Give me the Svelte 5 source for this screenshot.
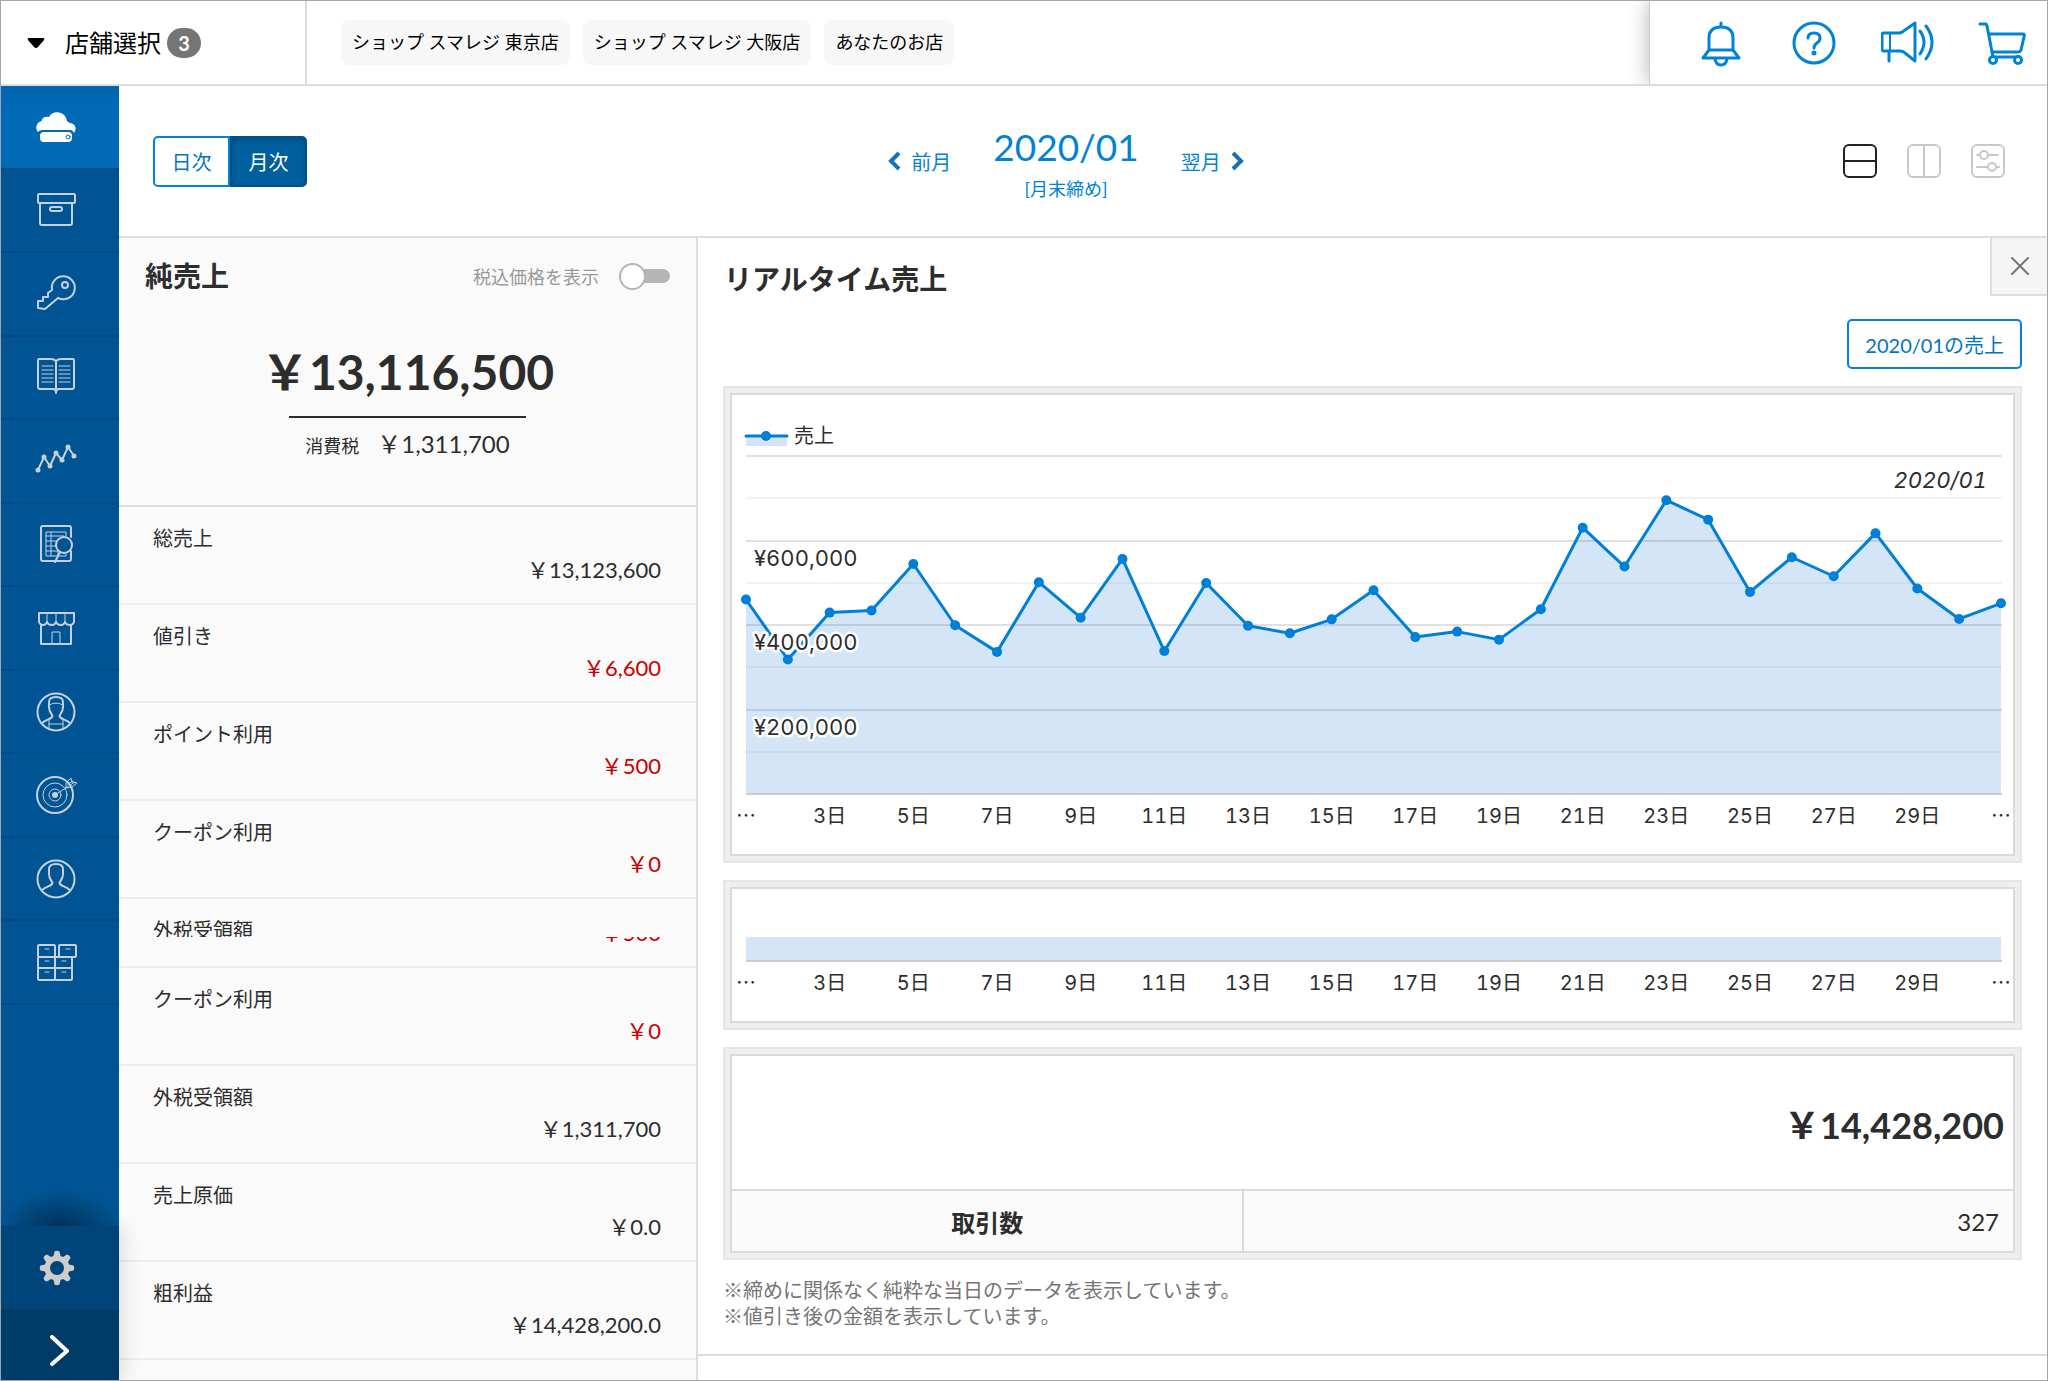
<script>
	const stores = ['ショップ スマレジ 東京店', 'ショップ スマレジ 大阪店', 'あなたのお店'];

	const menu = [
		{ icon: 'cloud', label: 'ホーム' },
		{ icon: 'box', label: '商品' },
		{ icon: 'key', label: '権限' },
		{ icon: 'book', label: '取引' },
		{ icon: 'trend', label: '売上分析' },
		{ icon: 'report', label: '帳票' },
		{ icon: 'shop', label: '店舗' },
		{ icon: 'staff', label: 'スタッフ' },
		{ icon: 'target', label: '目標' },
		{ icon: 'member', label: '会員' },
		{ icon: 'drawers', label: '在庫' }
	];

	const rowsTop = [
		{ label: '総売上', value: '￥13,123,600' },
		{ label: '値引き', value: '￥6,600', minus: true },
		{ label: 'ポイント利用', value: '￥500', minus: true },
		{ label: 'クーポン利用', value: '￥0', minus: true }
	];

	const rowsBottom = [
		{ label: 'クーポン利用', value: '￥0', minus: true },
		{ label: '外税受領額', value: '￥1,311,700' },
		{ label: '売上原価', value: '￥0.0' },
		{ label: '粗利益', value: '￥14,428,200.0' }
	];

	// daily sales, in thousands of yen
	const sales = [
		458, 316, 427, 432, 542, 397, 334, 499, 415, 554, 336, 497, 396, 378, 411, 480,
		369, 382, 363, 435, 628, 536, 693, 647, 476, 558, 513, 615, 484, 412, 449
	];

	const dayLabels = sales
		.map((_, i) => ({ index: i, text: i === 0 || i === sales.length - 1 ? '…' : `${i + 1}日` }))
		.filter((d) => d.index % 2 === 0);

	const plotTop = 60;
	const plotHeight = 338;
	const plotBottom = plotTop + plotHeight;
	const side = 14;

	const gridLines = [0, 1, 2, 3, 4, 5, 6, 7].map((n) => ({
		y: plotTop + Math.round((n * plotHeight) / 8),
		major: n % 2 === 0
	}));
	const yLabels = [600, 400, 200];

	let chartWidth = $state(1281);
	let taxIncluded = $state(false);
	let period = $state('month');

	let plotWidth = $derived(chartWidth - side * 2 + 3);

	function x(i) {
		return side + (i * (plotWidth - 1)) / (sales.length - 1);
	}

	function y(value) {
		return plotBottom - (value / 800) * plotHeight;
	}

	let points = $derived(sales.map((v, i) => ({ x: x(i), y: y(v) })));
	let line = $derived(points.map((p) => `${p.x},${p.y}`).join(' '));
	let area = $derived(`${x(0)},${plotBottom} ${line} ${x(sales.length - 1)},${plotBottom}`);
</script>

{#snippet menuIcon(name)}
	<svg class="menu-icon" viewBox="0 0 44 44" width="44" height="44" aria-hidden="true">
		{#if name === 'cloud'}
			<path class="solid" d="M4 27C1 24 2 17 7.500 16C8 12 12 11 15 12C18 5 31 5 33 16C34 17 35 17.500 36 18C42 19 43 24 40 28C39 25.500 37 25 35 25H10C7 25 5 25.500 4 27Z" />
			<rect class="solid" x="6" y="27" width="32" height="10" rx="4" />
			<circle class="dot-ring" cx="34" cy="32" r="2" />
		{:else if name === 'box'}
			<rect x="4" y="6" width="37" height="9" rx="1" />
			<path d="M6 15V35Q6 37 8 37H36Q38 37 38 35V15" />
			<rect x="16" y="19" width="12" height="4" rx="2" />
		{:else if name === 'key'}
			<path d="M24 26L11 37L4 36V29H9V25H14V21L18 18A11.500 11.500 0 1 1 24 26Z" />
			<circle cx="31" cy="13" r="3" />
		{:else if name === 'book'}
			<path d="M22 6Q20 4 17 4H5Q4 4 4 6V32Q4 34 6 34H20L22 36L24 34H38Q40 34 40 32V6Q40 4 39 4H27Q24 4 22 6V38" />
			<path class="fine" d="M8 11H19M8 15H19M8 19H19M8 23H19M8 27H19M25 11H36M25 15H36M25 19H36M25 23H36M25 27H36" />
		{:else if name === 'trend'}
			<path d="M4 31L10 18L16 27L22 14L28 21L34 8L40 17" />
			<g class="nodes">
				<circle cx="4" cy="31" r="2.500" /><circle cx="10" cy="18" r="2.500" /><circle cx="16" cy="27" r="2.500" />
				<circle cx="22" cy="14" r="2.500" /><circle cx="28" cy="21" r="2.500" /><circle cx="34" cy="8" r="2.500" />
				<circle cx="40" cy="17" r="2.500" />
			</g>
		{:else if name === 'report'}
			<path d="M37 15V6Q37 4 35 4H9Q7 4 7 6V37Q7 39 9 39H35Q37 39 37 37V29" />
			<path class="fine" d="M32 14V10H12V34H32V32M12 14H30M12 19H23M12 24H22M12 29H24M17 10V34M24 29V34" />
			<circle cx="30" cy="23" r="8" />
			<path d="M26 30L21 40" />
		{:else if name === 'shop'}
			<path d="M5 7H40V16Q39 19 36 19Q32 19 31 16Q30 19 27 19Q23 19 22 16Q21 19 18 19Q14 19 13 16Q12 19 9 19Q6 19 5 16Z" />
			<path class="fine" d="M13 7V16M22 7V16M31 7V16" />
			<path d="M7 19V38H37V19" />
			<path class="fine" d="M18 38V26H26V38" />
		{:else if name === 'staff' || name === 'member'}
			<circle cx="22" cy="22" r="18.500" />
			<path d="M8 33C13 29 18 29 18.500 26C18 24 15 22 15 17V12Q15 7 22 7Q29 7 29 12V17C29 22 26 24 25.500 26C26 29 31 29 36 33" />
			{#if name === 'staff'}
				<path class="fine" d="M15 15Q22 11 29 15M15 30V39M29 30V39M15 34H29" />
			{/if}
		{:else if name === 'target'}
			<circle cx="21" cy="22" r="18" />
			<circle class="fine" cx="21" cy="22" r="12" />
			<circle class="fine" cx="21" cy="22" r="6" />
			<circle class="solid" cx="21" cy="22" r="3" />
			<path class="fine" d="M21 22L41 9M32 15V10L37 5L38 9L43 10L38 14L32 15M34 11L39 8" />
		{:else if name === 'drawers'}
			<rect x="4" y="5" width="17" height="12" rx="1" />
			<rect x="25" y="5" width="17" height="12" rx="1" />
			<rect x="4" y="17" width="17" height="11" rx="1" />
			<rect x="21" y="17" width="17" height="11" rx="1" />
			<rect x="4" y="28" width="17" height="12" rx="1" />
			<rect x="21" y="28" width="17" height="12" rx="1" />
			<path class="fine" d="M11 9H15M32 9H36M11 21H15M28 21H32M11 32H15M28 32H32" />
		{/if}
	</svg>
{/snippet}

{#snippet summaryRow(row)}
	<div class="row">
		<dt>{row.label}</dt>
		<dd class:minus={row.minus}>{row.value}</dd>
	</div>
{/snippet}

{#snippet dayAxis(baseline)}
	{#each dayLabels as day}
		<text class:ellipsis={day.text === '…'} x={x(day.index)} y={baseline} text-anchor="middle">{day.text}</text>
	{/each}
{/snippet}

<div class="app">
	<header class="topbar">
		<button class="store-select">
			<svg viewBox="0 0 18 12" width="18" height="12" aria-hidden="true"><path d="M2 1H16Q18 1 17 3L11 10Q9 12 7 10L1 3Q0 1 2 1Z" /></svg>
			<span>店舗選択</span>
			<span class="badge">3</span>
		</button>
		<div class="stores">
			{#each stores as store}
				<span class="store">{store}</span>
			{/each}
		</div>
		<div class="tools">
			<button aria-label="お知らせ">
				<svg viewBox="0 0 56 48" width="56" height="48" aria-hidden="true">
					<path d="M28 4V8M16 31V19Q16 8 28 8Q40 8 40 19V31L46 39H10L16 31H40" />
					<path d="M22 40Q23 46 28 46Q33 46 34 40" />
				</svg>
			</button>
			<button aria-label="ヘルプ">
				<svg viewBox="0 0 56 48" width="56" height="48" aria-hidden="true">
					<circle cx="27" cy="24" r="20" />
					<path d="M21 19Q21 14 27 14Q33 14 33 19Q33 22 30 24Q27 26 27 29" />
					<circle class="solid" cx="27" cy="34" r="1" />
				</svg>
			</button>
			<button aria-label="案内">
				<svg viewBox="0 0 56 48" width="56" height="48" aria-hidden="true">
					<path d="M3 14H19Q22 13 24 11L34 4V42L24 34Q22 32 19 32H3Q1 32 1 30V16Q1 14 3 14Z" />
					<path class="fine" d="M9 14V32" />
					<path d="M8 32V42M39 12Q47 23 39 35M45 7Q57 23 45 40" />
				</svg>
			</button>
			<button aria-label="カート">
				<svg viewBox="0 0 56 48" width="56" height="48" aria-hidden="true">
					<path d="M5 5H11L12 7L18 38H45" />
					<path d="M14 15H48Q50 15 49 18L46 31Q45 33 43 33H17" />
					<circle class="wheel" cx="18" cy="41" r="3.500" />
					<circle class="wheel" cx="43" cy="41" r="3.500" />
				</svg>
			</button>
		</div>
	</header>

	<div class="body">
		<aside class="sidebar">
			<nav class="menu">
				{#each menu as item, i}
					<a href="/{item.icon}" class:active={i === 0} aria-label={item.label}>{@render menuIcon(item.icon)}</a>
				{/each}
			</nav>
			<div class="sidebar-foot">
				<a class="settings" href="/settings" aria-label="設定">
					<svg viewBox="0 0 36 36" width="36" height="36" aria-hidden="true">
						<path fill-rule="evenodd" d="M15.500 1.500Q18 0 20.500 1.500L21.500 6L24 7L28 4.500Q31 5 31.500 8L29 12L30 14.500L34.500 15.500Q36 18 34.500 20.500L30 21.500L29 24L31.500 28Q31 31 28 31.500L24 29L21.500 30L20.500 34.500Q18 36 15.500 34.500L14.500 30L12 29L8 31.500Q5 31 4.500 28L7 24L6 21.500L1.500 20.500Q0 18 1.500 15.500L6 14.500L7 12L4.500 8Q5 5 8 4.500L12 7L14.500 6ZM18 11A7 7 0 1 0 18 25A7 7 0 1 0 18 11Z" />
					</svg>
				</a>
				<button class="expand" aria-label="メニューを開く">
					<svg viewBox="0 0 20 32" width="20" height="32" aria-hidden="true"><path d="M2 2L17 16L2 29" /></svg>
				</button>
			</div>
		</aside>

		<main>
			<div class="toolbar">
				<div class="period">
					<button class:on={period === 'day'} onclick={() => (period = 'day')}>日次</button>
					<button class:on={period === 'month'} onclick={() => (period = 'month')}>月次</button>
				</div>
				<div class="month-nav">
					<a href="/prev">
						<svg viewBox="0 0 14 20" width="14" height="20" aria-hidden="true"><path d="M12 2L4 10L12 18" /></svg>前月
					</a>
					<div class="current">
						<strong>2020/01</strong>
						<span>[月末締め]</span>
					</div>
					<a href="/next">
						翌月<svg viewBox="0 0 14 20" width="14" height="20" aria-hidden="true"><path d="M2 2L10 10L2 18" /></svg>
					</a>
				</div>
				<div class="layouts">
					<button class="on" aria-label="上下に並べる">
						<svg viewBox="0 0 34 34" width="34" height="34" aria-hidden="true"><rect x="1" y="1" width="32" height="32" rx="5" /><path d="M1 17H33" /></svg>
					</button>
					<button aria-label="左右に並べる">
						<svg viewBox="0 0 34 34" width="34" height="34" aria-hidden="true"><rect x="1" y="1" width="32" height="32" rx="5" /><path d="M17 1V33" /></svg>
					</button>
					<button aria-label="表示設定">
						<svg viewBox="0 0 34 34" width="34" height="34" aria-hidden="true">
							<rect x="1" y="1" width="32" height="32" rx="5" />
							<path d="M6 11H9M17 11H27M6 23H17M25 23H28" />
							<circle cx="13" cy="11" r="4" /><circle cx="21" cy="23" r="4" />
						</svg>
					</button>
				</div>
			</div>

			<div class="panels">
				<section class="summary">
					<div class="net">
						<div class="net-head">
							<h2>純売上</h2>
							<label for="tax">税込価格を表示</label>
							<input id="tax" class="switch" type="checkbox" bind:checked={taxIncluded} />
						</div>
						<p class="amount">￥13,116,500</p>
						<p class="tax"><span>消費税</span>￥1,311,700</p>
					</div>
					<dl>
						{#each rowsTop as row}
							{@render summaryRow(row)}
						{/each}
						<div class="slice head">
							{@render summaryRow({ label: '外税受領額', value: '' })}
						</div>
						<div class="slice tail">
							{@render summaryRow({ label: '', value: '￥500', minus: true })}
						</div>
						{#each rowsBottom as row}
							{@render summaryRow(row)}
						{/each}
					</dl>
				</section>

				<section class="realtime">
					<div class="realtime-head">
						<h2>リアルタイム売上</h2>
						<button class="close" aria-label="閉じる">
							<svg viewBox="0 0 20 20" width="20" height="20" aria-hidden="true"><path d="M2 2L18 18M18 2L2 18" /></svg>
						</button>
					</div>
					<div class="realtime-body">
						<button class="month-sales">2020/01の売上</button>

						<div class="card">
							<div class="card-inner" bind:clientWidth={chartWidth}>
								<svg class="chart" width={chartWidth} height="459" role="img" aria-label="売上">
									<rect class="area" x={side} y="41" width="41" height="10" />
									<path class="line" d="M{side} 41h41" />
									<circle class="point" cx={side + 20} cy="41" r="5" />
									<text x="62" y="48">売上</text>

									{#each gridLines as g}
										<rect class={g.major ? 'grid major' : 'grid'} x={side} y={g.y} width={plotWidth} height="2" />
									{/each}
									<rect class="grid base" x={side} y={plotBottom} width={plotWidth} height="2" />

									<polygon class="area" points={area} />
									<polyline class="line" points={line} />
									{#each points as p}
										<circle class="point" cx={p.x} cy={p.y} r="5" />
									{/each}

									{#each yLabels as value}
										<text class="halo" x={side + 8} y={y(value) + 26}>¥{value},000</text>
									{/each}
									<text class="month" x={chartWidth - 26} y="93" text-anchor="end">2020/01</text>
									{@render dayAxis(428)}
								</svg>
							</div>
						</div>

						<div class="card">
							<div class="card-inner">
								<svg class="chart" width={chartWidth} height="132" role="img" aria-label="日付">
									<rect class="area" x={side} y="48" width={plotWidth - 1} height="23" />
									<rect class="grid base" x={side} y="71" width={plotWidth} height="2" />
									{@render dayAxis(101)}
								</svg>
							</div>
						</div>

						<div class="card">
							<table class="card-inner totals">
								<colgroup><col class="name" /><col /></colgroup>
								<tbody>
									<tr><td class="total" colspan="2">￥14,428,200</td></tr>
									<tr class="count"><th scope="row">取引数</th><td>327</td></tr>
								</tbody>
							</table>
						</div>

						<p class="notes">
							※締めに関係なく純粋な当日のデータを表示しています。<br />
							※値引き後の金額を表示しています。
						</p>
					</div>
				</section>
			</div>
		</main>
	</div>
</div>

<style>
	:global(body) {
		margin: 0;
	}

	.app {
		display: flex;
		flex-direction: column;
		box-sizing: border-box;
		height: 100vh;
		overflow: hidden;
		border: 1px solid #a5a5a5;
		background: #fff;
		color: #2d2d2d;
		font-family: Lato, 'Noto Sans CJK JP', sans-serif;
		font-size: 20px;
	}

	button {
		padding: 0;
		border: 0;
		background: none;
		color: inherit;
		font: inherit;
		cursor: pointer;
	}

	a {
		color: inherit;
		text-decoration: none;
	}

	svg {
		display: block;
		fill: none;
		stroke-linecap: round;
		stroke-linejoin: round;
	}

	h2, p, dl, dd {
		margin: 0;
	}

	h2 {
		font-size: 28px;
		line-height: 40px;
	}

	/* top bar */
	.topbar {
		display: flex;
		flex-shrink: 0;
		height: 83px;
		border-bottom: 2px solid #ddd;
		color: #000;
	}

	.store-select {
		display: flex;
		align-items: center;
		box-sizing: border-box;
		width: 306px;
		padding-left: 26px;
		border-right: 2px solid #ddd;
		font-size: 24px;
		line-height: 30px;
	}

	.store-select svg {
		margin-right: 20px;
		fill: #000;
	}

	.badge {
		width: 34px;
		margin-left: 6px;
		border-radius: 15px;
		background: #757575;
		color: #fff;
		font-size: 20px;
		font-weight: 700;
	}

	.stores {
		display: flex;
		flex: 1;
		gap: 13px;
		align-items: center;
		padding-left: 34px;
	}

	.store {
		padding: 0 11px;
		border-radius: 8px;
		background: #f7f7f7;
		font-size: 18px;
		line-height: 45px;
	}

	.tools {
		display: flex;
		gap: 38px;
		align-items: center;
		padding: 0 16px 0 43px;
		border-left: 1px solid #ccc;
		box-shadow: 0 0 20px rgba(0, 0, 0, 0.3);
		clip-path: inset(0 0 0 -24px);
	}

	.tools svg {
		stroke: #0083d6;
		stroke-width: 3;
	}

	.tools .fine {
		stroke-width: 2;
	}

	.tools .wheel {
		fill: #fff;
	}

	.tools .solid {
		fill: #0083d6;
	}

	.body {
		display: flex;
		flex: 1;
		min-height: 0;
	}

	/* side menu */
	.sidebar {
		position: relative;
		z-index: 1;
		display: flex;
		flex-direction: column;
		flex-shrink: 0;
		width: 118px;
		background: #005493;
	}

	.menu {
		display: grid;
		grid-auto-rows: 1fr;
		height: 919px;
	}

	.menu a {
		display: flex;
		align-items: center;
		justify-content: center;
		padding-right: 8px;
		border-bottom: 2px solid #004c84;
	}

	.menu .active {
		background: linear-gradient(#0064ac, #006ab6 20px);
	}

	.menu-icon {
		stroke: #c5d0dc;
		stroke-width: 2;
	}

	.menu-icon .fine {
		stroke-width: 1;
	}

	.menu-icon .solid,
	.menu-icon .nodes {
		fill: #c5d0dc;
		stroke: none;
	}

	.active .menu-icon .solid {
		fill: #fff;
	}

	.menu-icon .dot-ring {
		stroke: #006ab6;
		stroke-width: 1;
	}

	.sidebar-foot {
		position: relative;
		display: flex;
		flex-direction: column;
		margin-top: auto;
		box-shadow: 6px 0 16px rgba(0, 0, 0, 0.1);
	}

	.sidebar-foot::before {
		position: absolute;
		right: 0;
		bottom: 100%;
		left: 0;
		height: 36px;
		background: radial-gradient(ellipse at bottom, #003358, rgba(0, 60, 104, 0) 70%);
		content: '';
	}

	.settings,
	.expand {
		display: flex;
		align-items: center;
		justify-content: center;
	}

	.settings {
		height: 83px;
		padding-right: 6px;
		background: #00457a;
	}

	.settings svg {
		fill: #ccc;
	}

	.expand {
		height: 71px;
		padding-top: 12px;
		background: #003c67;
	}

	.expand svg {
		stroke: #fff;
		stroke-width: 4;
	}

	main {
		display: flex;
		flex: 1;
		flex-direction: column;
		min-width: 0;
	}

	/* toolbar */
	.toolbar {
		display: flex;
		flex-shrink: 0;
		align-items: center;
		justify-content: space-between;
		height: 150px;
		padding: 0 42px 0 34px;
		border-bottom: 2px solid #ddd;
		color: #0083d6;
	}

	.period {
		display: flex;
	}

	.period button {
		box-sizing: border-box;
		width: 77px;
		height: 51px;
		border: 2px solid #0083d6;
		border-radius: 5px 0 0 5px;
		color: #0074c2;
	}

	.period button + button {
		border-radius: 0 5px 5px 0;
	}

	.period .on {
		border-color: #00508a;
		background: #00609f;
		box-shadow: inset 0 3px 6px rgba(0, 0, 0, 0.2);
		color: #fff;
	}

	.month-nav {
		display: flex;
		gap: 42px;
		align-items: center;
		margin-right: 18px;
	}

	.month-nav a {
		display: flex;
		gap: 10px;
		align-items: center;
	}

	.month-nav svg {
		stroke: #1571b8;
		stroke-linecap: butt;
		stroke-linejoin: miter;
		stroke-width: 4;
	}

	.current {
		display: flex;
		flex-direction: column;
		align-items: center;
	}

	.current strong {
		font-size: 37px;
		font-weight: 400;
		line-height: 56px;
	}

	.current span {
		font-size: 18px;
		line-height: 28px;
	}

	.layouts {
		display: flex;
		gap: 30px;
	}

	.layouts svg {
		stroke: #c8c8c8;
		stroke-width: 2;
	}

	.layouts .on svg {
		stroke: #222;
	}

	.panels {
		display: flex;
		flex: 1;
		min-height: 0;
	}

	/* net sales */
	.summary {
		flex-shrink: 0;
		width: 577px;
		overflow: hidden;
		border-right: 2px solid #ddd;
		background: #fafafa;
	}

	.net {
		box-sizing: border-box;
		height: 269px;
		padding: 18px 26px 0;
		border-bottom: 2px solid #ddd;
	}

	.net-head {
		display: flex;
		align-items: center;
	}

	.net-head label {
		margin-left: auto;
		color: #999;
		font-size: 18px;
	}

	.switch {
		display: flex;
		align-items: center;
		width: 51px;
		height: 14px;
		margin: 0 0 0 20px;
		border-radius: 7px;
		background: #b5b5b5;
		appearance: none;
		cursor: pointer;
	}

	.switch::before {
		box-sizing: border-box;
		width: 27px;
		height: 27px;
		border: 2px solid #b5b5b5;
		border-radius: 50%;
		background: #fff;
		content: '';
	}

	.switch:checked {
		justify-content: flex-end;
		background: #0083d6;
	}

	.amount {
		margin: 40px auto 0;
		font-size: 48px;
		font-weight: 700;
		line-height: 72px;
		text-align: center;
		white-space: nowrap;
	}

	.tax {
		width: 237px;
		margin: 8px auto 0;
		border-top: 2px solid #2d2d2d;
		font-size: 24px;
		line-height: 52px;
		text-align: center;
	}

	.tax span {
		margin-right: 18px;
		font-size: 18px;
	}

	.row {
		display: flex;
		flex-direction: column;
		flex-shrink: 0;
		box-sizing: border-box;
		height: 98px;
		padding: 16px 35px 0 34px;
		border-bottom: 2px solid #eee;
		line-height: 30px;
	}

	.row dt {
		height: 30px;
	}

	.row dd {
		font-size: 22px;
		line-height: 34px;
		text-align: right;
	}

	.row .minus {
		color: #c00;
	}

	.slice {
		display: flex;
		flex-direction: column;
		overflow: hidden;
	}

	.slice.head {
		height: 38px;
	}

	.slice.tail {
		justify-content: flex-end;
		height: 31px;
	}

	/* realtime sales */
	.realtime {
		flex: 1;
		min-width: 0;
	}

	.realtime-head {
		display: flex;
		justify-content: space-between;
		padding-left: 26px;
	}

	.realtime-head h2 {
		padding-top: 21px;
		height: 37px;
	}

	.close {
		display: flex;
		align-items: center;
		justify-content: center;
		width: 57px;
		height: 58px;
		border-bottom: 2px solid #ddd;
		border-left: 2px solid #ddd;
		box-sizing: border-box;
		background: #f5f5f5;
	}

	.close svg {
		stroke: #757575;
		stroke-width: 2;
	}

	.realtime-body {
		display: flex;
		flex-direction: column;
		gap: 17px;
		padding: 23px 25px 25px;
		border-bottom: 2px solid #ddd;
	}

	.month-sales {
		box-sizing: border-box;
		align-self: flex-end;
		height: 50px;
		padding: 0 16px;
		border: 2px solid #0083d6;
		border-radius: 5px;
		color: #0074c2;
	}

	.card {
		padding: 5px;
		border: 2px solid #e6e6e6;
		background: #eee;
	}

	.card-inner {
		border: 2px solid #dadada;
		background: #fff;
	}

	.chart text {
		fill: #2d2d2d;
		font-family: Inter, 'Noto Sans CJK JP', sans-serif;
		font-size: 20px;
		font-variant-numeric: tabular-nums;
	}

	.chart .ellipsis {
		font-family: 'Noto Sans CJK JP', sans-serif;
	}

	.chart .month {
		font-size: 22px;
		font-style: italic;
	}

	.chart .halo {
		font-size: 22px;
		paint-order: stroke;
		stroke: #fff;
		stroke-width: 5;
	}

	.area {
		fill: #0b6fd3;
		fill-opacity: 0.18;
	}

	.line {
		stroke: #007fd8;
		stroke-width: 3;
	}

	.point {
		fill: #007fd8;
	}

	.grid {
		fill: #f3f3f3;
	}

	.grid.major {
		fill: #e0e0e0;
	}

	.grid.base {
		fill: #ccc;
	}

	.totals {
		width: 100%;
		border-collapse: separate;
		border-spacing: 0;
		table-layout: fixed;
	}

	.totals .name {
		width: 40%;
	}

	.totals td {
		padding: 0 9px;
		text-align: right;
	}

	.totals .total {
		height: 133px;
		font-size: 36px;
		font-weight: 700;
	}

	.count th,
	.totals .count td {
		box-sizing: border-box;
		height: 62px;
		padding: 0 14px;
		border-top: 2px solid #dadada;
		background: #fbfbfb;
		font-size: 24px;
	}

	.count th {
		border-right: 2px solid #dadada;
	}

	.notes {
		color: #757575;
		line-height: 26px;
	}
</style>
